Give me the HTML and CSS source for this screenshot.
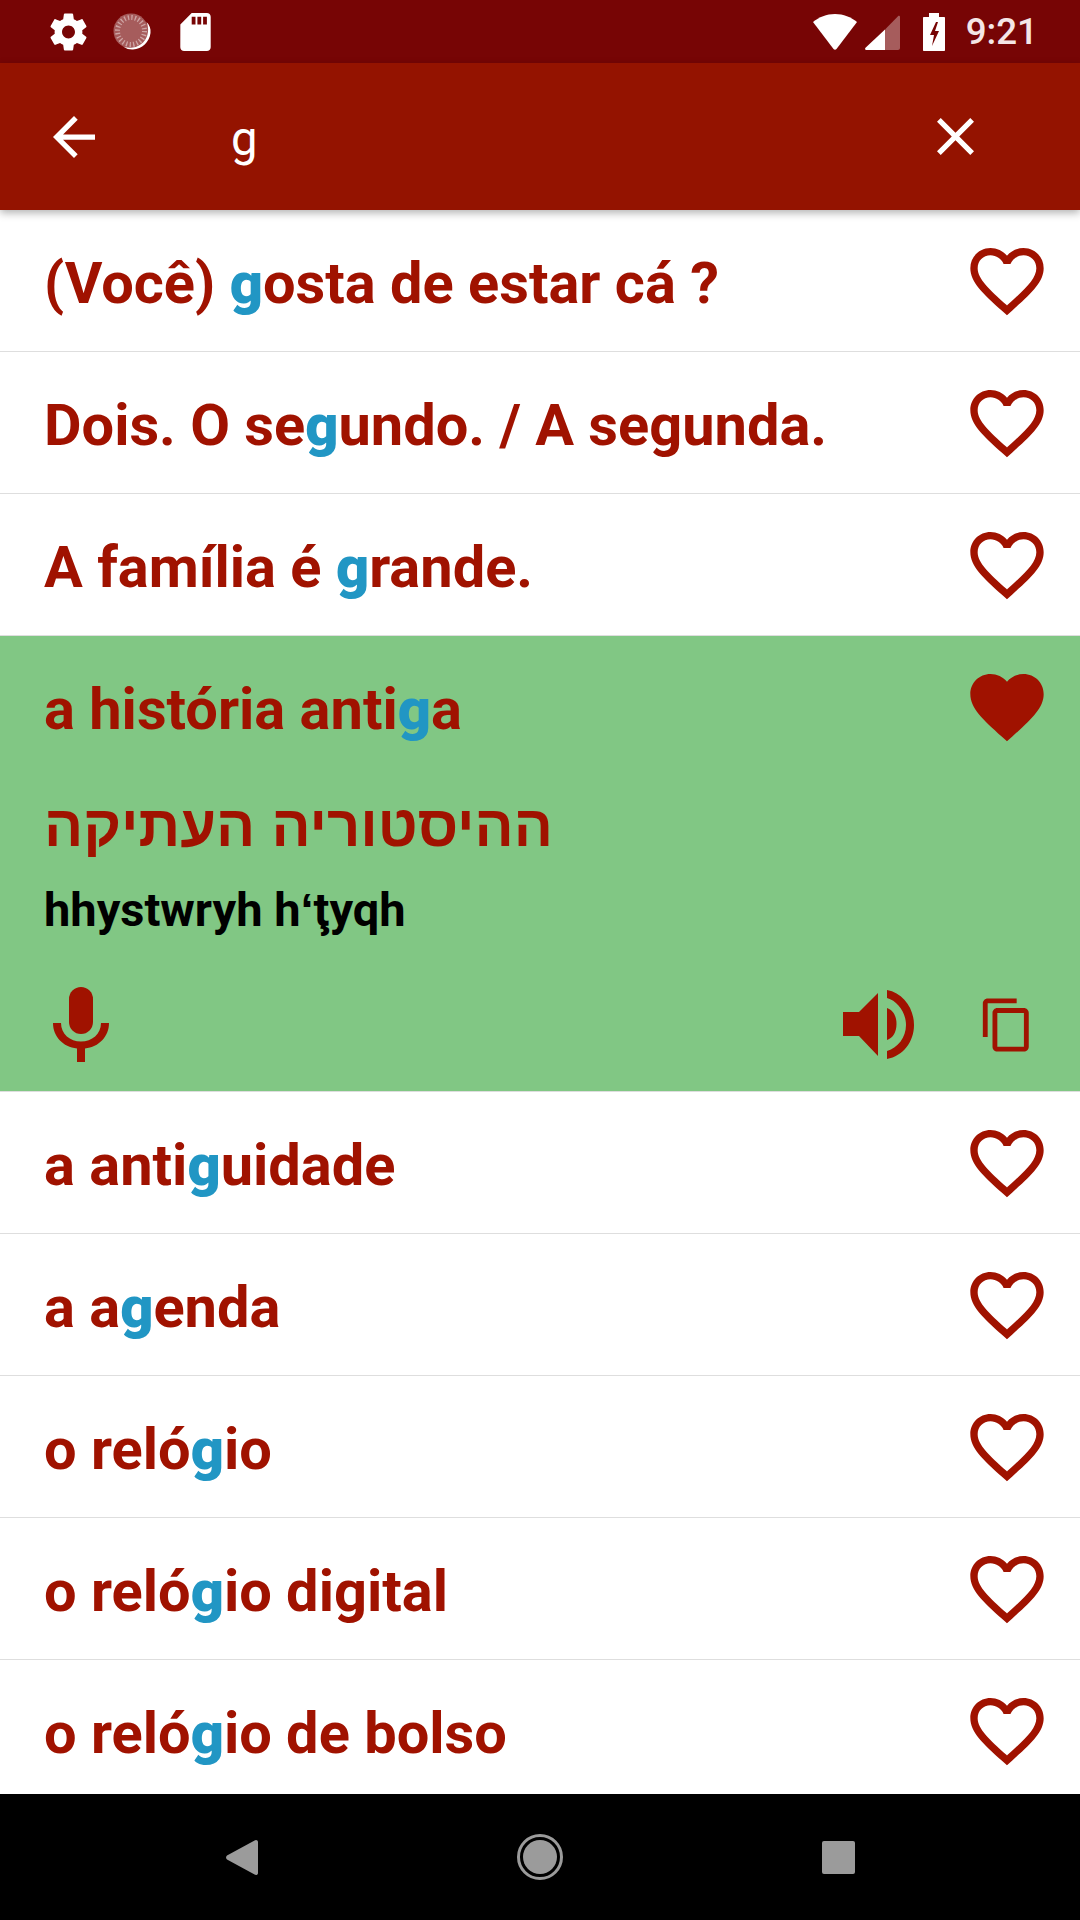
FILE: index.html
```html
<!DOCTYPE html>
<html lang="pt">
<head>
    <meta charset="UTF-8">
    <meta name="viewport" content="width=device-width, initial-scale=1.0">
    <title>Busca de frases</title>
    <link rel="stylesheet" href="styles.css">
</head>
<body>
    <div class="screen">
        <!-- Barra de status -->
        <div class="status-bar">
            <div class="status-left">
                <svg class="ic-gear" viewBox="2 2 20 20"><path fill="#fff" d="M19.43 12.98c.04-.32.07-.64.07-.98s-.03-.66-.07-.98l2.11-1.65c.19-.15.24-.42.12-.64l-2-3.46c-.12-.22-.39-.3-.61-.22l-2.49 1c-.52-.4-1.08-.73-1.69-.98l-.38-2.65C14.46 2.18 14.25 2 14 2h-4c-.25 0-.46.18-.49.42l-.38 2.65c-.61.25-1.17.59-1.69.98l-2.49-1c-.23-.09-.49 0-.61.22l-2 3.46c-.13.22-.07.49.12.64l2.11 1.65c-.04.32-.07.65-.07.98s.03.66.07.98l-2.11 1.65c-.19.15-.24.42-.12.64l2 3.46c.12.22.39.3.61.22l2.49-1c.52.4 1.08.73 1.69.98l.38 2.65c.03.24.24.42.49.42h4c.25 0 .46-.18.49-.42l.38-2.65c.61-.25 1.17-.59 1.69-.98l2.49 1c.23.09.49 0 .61-.22l2-3.46c.12-.22.07-.49-.12-.64l-2.11-1.65zM12 15.5c-1.93 0-3.5-1.57-3.5-3.5s1.57-3.5 3.5-3.5 3.5 1.57 3.5 3.5-1.57 3.5-3.5 3.5z"/></svg>
                <svg class="ic-disc" viewBox="0 0 38 38">
                    <circle cx="18" cy="18" r="17.500" fill="#fff" opacity="0.35"/>
                    <circle cx="18" cy="18" r="13.500" fill="none" stroke="#fff" stroke-opacity="0.45" stroke-width="5" stroke-dasharray="1.300 2.230"/>
                    <path fill="#fff" d="M33.500 9C36.500 12 38 15.500 37.500 20 36.500 29 29 36 20 36.500c-3.500.2-6.500-.7-9-2.500 3 .8 6 1 9 .5C28 33.500 34 27 35 19c.4-3.800-.3-7-1.500-10z"/>
                </svg>
                <svg class="ic-sd" viewBox="4 2 16 20"><path fill="#fff" d="M18 2h-8L4.020 8 4 20c0 1.100.9 2 2 2h12c1.100 0 2-.9 2-2V4c0-1.100-.9-2-2-2zm-6 6h-2V4h2v4zm3 0h-2V4h2v4zm3 0h-2V4h2v4z"/></svg>
            </div>
            <div class="status-right">
                <svg class="ic-wifi" viewBox="0 0 44 36"><path fill="#fff" d="M22 0C13.500 0 6 3 0 8l20.500 27c.8 1 2.200 1 3 0L44 8C38 3 30.500 0 22 0z"/></svg>
                <svg class="ic-signal" viewBox="0 0 35 35">
                    <path fill="#fff" opacity="0.35" d="M20 14.500 33 1.200c.8-.8 2-.3 2 .8V33c0 1.100-.9 2-2 2H20z"/>
                    <path fill="#fff" d="M20 14.500V35H1.500C.3 35-.4 33.700.5 32.800z"/>
                </svg>
                <svg class="ic-battery" viewBox="0 0 22 38"><path fill="#fff" fill-rule="evenodd" d="M6 0h10v4h5c.6 0 1 .4 1 1v32c0 .6-.4 1-1 1H1c-.6 0-1-.4-1-1V5c0-.6.4-1 1-1h5zM13 9 7 22h4l-2 11 7-15h-4l3-9z"/></svg>
                <span class="clock">9:21</span>
            </div>
        </div>

        <!-- Barra de busca -->
        <div class="toolbar">
            <svg class="ic-back" viewBox="4 4 16 16"><path fill="#fff" d="M20 11H7.830l5.590-5.590L12 4l-8 8 8 8 1.410-1.410L7.830 13H20v-2z"/></svg>
            <span class="query">g</span>
            <svg class="ic-close" viewBox="5 5 14 14"><path fill="#fff" d="M19 6.410 17.590 5 12 10.590 6.410 5 5 6.410 10.590 12 5 17.590 6.410 19 12 13.410 17.590 19 19 17.590 13.410 12z"/></svg>
        </div>

        <!-- Lista de frases -->
        <div class="list">
            <div class="row">
                <span class="phrase">(Você) <b>g</b>osta de estar cá ?</span>
                <svg class="heart" viewBox="0 0 24 24"><use href="#heart-line"/></svg>
            </div>
            <div class="row">
                <span class="phrase">Dois. O se<b>g</b>undo. / A segunda.</span>
                <svg class="heart" viewBox="0 0 24 24"><use href="#heart-line"/></svg>
            </div>
            <div class="row">
                <span class="phrase">A família é <b>g</b>rande.</span>
                <svg class="heart" viewBox="0 0 24 24"><use href="#heart-line"/></svg>
            </div>

            <div class="open-row">
                <div class="open-head">
                    <span class="phrase">a história anti<b>g</b>a</span>
                    <svg class="heart" viewBox="0 0 24 24"><path d="M12 21.350l-1.450-1.320C5.400 15.360 2 12.280 2 8.500 2 5.420 4.420 3 7.500 3c1.740 0 3.410.81 4.500 2.090C13.090 3.810 14.760 3 16.500 3 19.580 3 22 5.420 22 8.500c0 3.780-3.400 6.860-8.550 11.540L12 21.350z"/></svg>
                </div>
                <div class="hebrew" lang="he">ההיסטוריה העתיקה</div>
                <div class="translit">hhystwryh hʻţyqh</div>
                <div class="actions">
                    <svg class="ic-mic" viewBox="0 0 56 75">
                        <rect x="16" width="24" height="47" rx="12"/>
                        <path d="M0 36h8c0 11 9 18.500 20 18.500S48 47 48 36h8c0 13.500-10 24-24 25.500V75h-8V61.500C10 60 0 49.500 0 36z"/>
                    </svg>
                    <svg class="ic-speaker" viewBox="0 0 71 69">
                        <path d="M0 22h16L35 3v63L16 46H0z"/>
                        <path d="M44 18c6 2 9.500 8 9.500 16S50 48 44 50z"/>
                        <path d="M44 0c16 3 27 18 27 35S60 66 44 69v-8c11-3 19-14 19-26S55 11 44 8z"/>
                    </svg>
                    <svg class="ic-copy" viewBox="0 0 24 24"><path d="M16 1H4c-1.100 0-2 .9-2 2v14h2V3h12V1zm3 4H8c-1.100 0-2 .9-2 2v14c0 1.100.9 2 2 2h11c1.100 0 2-.9 2-2V7c0-1.100-.9-2-2-2zm0 16H8V7h11v14z"/></svg>
                </div>
            </div>

            <div class="row">
                <span class="phrase">a anti<b>g</b>uidade</span>
                <svg class="heart" viewBox="0 0 24 24"><use href="#heart-line"/></svg>
            </div>
            <div class="row">
                <span class="phrase">a a<b>g</b>enda</span>
                <svg class="heart" viewBox="0 0 24 24"><use href="#heart-line"/></svg>
            </div>
            <div class="row">
                <span class="phrase">o reló<b>g</b>io</span>
                <svg class="heart" viewBox="0 0 24 24"><use href="#heart-line"/></svg>
            </div>
            <div class="row">
                <span class="phrase">o reló<b>g</b>io digital</span>
                <svg class="heart" viewBox="0 0 24 24"><use href="#heart-line"/></svg>
            </div>
            <div class="row">
                <span class="phrase">o reló<b>g</b>io de bolso</span>
                <svg class="heart" viewBox="0 0 24 24"><use href="#heart-line"/></svg>
            </div>
        </div>

        <!-- Barra de navegação -->
        <div class="nav-bar">
            <svg class="ic-nav-back" viewBox="0 0 32 35"><path d="M30 0c1.100 0 2 .7 2 2v31c0 1.500-1.100 2-2 2-.5 0-1-.2-1.400-.5L1 19.500c-1.300-1-1.300-3 0-4L28.600.5C29 .2 29.500 0 30 0z"/></svg>
            <svg class="ic-nav-home" viewBox="0 0 46 46">
                <circle cx="23" cy="23" r="21.500" fill="none" stroke="#9b9b9b" stroke-width="3"/>
                <circle cx="23" cy="23" r="17"/>
            </svg>
            <div class="nav-square"></div>
        </div>
    </div>

    <svg class="defs" aria-hidden="true">
        <symbol id="heart-line" viewBox="0 0 24 24">
            <path d="M16.500 3c-1.740 0-3.410.81-4.500 2.090C10.910 3.810 9.240 3 7.500 3 4.420 3 2 5.420 2 8.500c0 3.780 3.400 6.860 8.550 11.540L12 21.350l1.450-1.320C18.600 15.360 22 12.280 22 8.500 22 5.420 19.580 3 16.500 3zm-4.400 15.550l-.1.1-.1-.1C7.140 14.240 4 11.390 4 8.500 4 6.500 5.500 5 7.500 5c1.540 0 3.040.99 3.570 2.360h1.870C13.460 5.990 14.960 5 16.500 5c2 0 3.500 1.500 3.500 3.500 0 2.890-3.140 5.740-7.900 10.050z"/>
        </symbol>
    </svg>
</body>
</html>
```

FILE: styles.css
```css
* {
    box-sizing: border-box;
}
body {
    margin: 0;
    font-family: Roboto, sans-serif;
    background-color: #fff;
}
svg {
    display: block;
    flex: none;
}
.defs {
    display: none;
}
.screen {
    width: 1080px;
    height: 1920px;
    display: flex;
    flex-direction: column;
    overflow: hidden;
}

/* status bar */
.status-bar {
    height: 63px;
    flex: none;
    background-color: #770505;
    display: flex;
    justify-content: space-between;
    align-items: center;
    padding: 0 42px 0 50px;
}
.status-left,
.status-right {
    display: flex;
    align-items: center;
}
.ic-gear {
    width: 37px;
    height: 38px;
}
.ic-disc {
    width: 38px;
    height: 38px;
    margin-left: 26px;
}
.ic-sd {
    width: 31px;
    height: 38px;
    margin-left: 29px;
}
.ic-wifi {
    width: 44px;
    height: 36px;
}
.ic-signal {
    width: 35px;
    height: 35px;
    margin-left: 8px;
    margin-top: 2px;
}
.ic-battery {
    width: 22px;
    height: 38px;
    margin-left: 23px;
}
.clock {
    margin-left: 21px;
    color: #f4e6e6;
    font-size: 36.75px;
    font-weight: 500;
}

/* search toolbar */
.toolbar {
    height: 147px;
    flex: none;
    background-color: #941300;
    display: flex;
    align-items: center;
    padding: 0 106px 0 53px;
    box-shadow: 0 3px 8px rgba(0, 0, 0, 0.3);
    position: relative;
}
.ic-back {
    width: 42px;
    height: 42px;
}
.query {
    flex: 1;
    margin-left: 136px;
    margin-top: 4px;
    color: #fff;
    font-size: 47.25px;
}
.ic-close {
    width: 37px;
    height: 37px;
}

/* list */
.list {
    flex: 1;
    min-height: 0;
    overflow: hidden;
}
.row {
    height: 142px;
    display: flex;
    justify-content: space-between;
    align-items: center;
    padding: 0 29px 0 44px;
    border-bottom: 1px solid #dedede;
}
.phrase {
    margin-top: 5px;
    color: #a01200;
    font-size: 57.75px;
    font-weight: 700;
}
.phrase b {
    color: #2196c4;
}
.heart {
    width: 88px;
    height: 88px;
    fill: #a01200;
}
.open-row {
    height: 456px;
    background-color: #81c784;
    padding: 0 29px 0 44px;
    border-bottom: 1px solid #dedede;
}
.open-head {
    height: 141px;
    display: flex;
    justify-content: space-between;
    align-items: center;
}
.hebrew {
    margin-top: 15px;
    color: #a01200;
    font-family: "Liberation Sans", sans-serif;
    font-size: 58px;
    font-weight: 700;
    line-height: 68px;
}
.translit {
    margin-top: 24px;
    color: #000;
    font-size: 47px;
    font-weight: 700;
    line-height: 52px;
}
.actions {
    margin-top: 51px;
    display: flex;
    align-items: center;
    fill: #a01200;
}
.ic-mic {
    width: 56px;
    height: 75px;
    margin-left: 9px;
}
.ic-speaker {
    width: 71px;
    height: 69px;
    margin-left: auto;
}
.ic-copy {
    width: 58px;
    height: 58px;
    margin-left: 64px;
    margin-right: 15px;
}

/* navigation bar */
.nav-bar {
    height: 126px;
    flex: none;
    background-color: #000;
    display: flex;
    justify-content: center;
    align-items: center;
    gap: 259px;
    fill: #9b9b9b;
}
.ic-nav-back {
    width: 32px;
    height: 35px;
}
.ic-nav-home {
    width: 46px;
    height: 46px;
}
.nav-square {
    width: 33px;
    height: 33px;
    border-radius: 2px;
    background-color: #9b9b9b;
}
```
